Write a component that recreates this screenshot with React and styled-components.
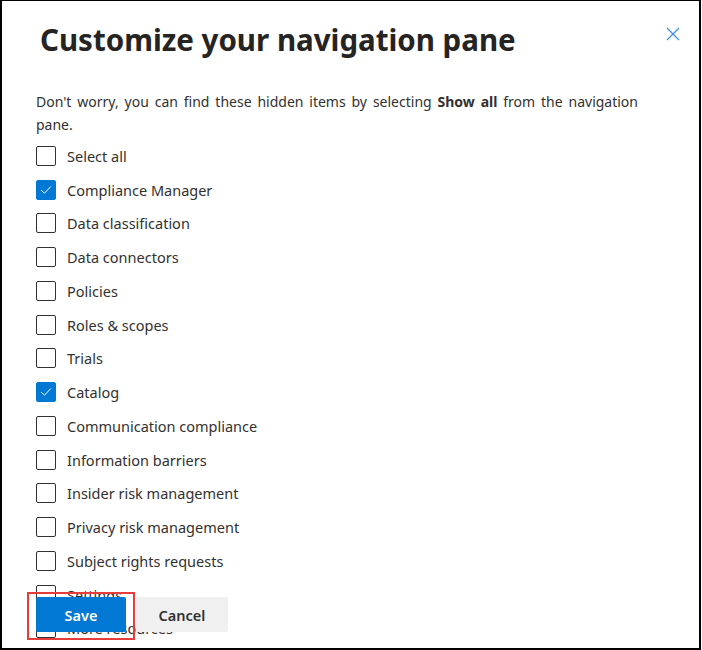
import React from "react";
import styled, { createGlobalStyle } from "styled-components";

const GlobalStyle = createGlobalStyle`
  html, body { margin: 0; padding: 0; background: #ffffff; }
  body { font-family: "Noto Sans", "Open Sans", sans-serif; color: #323130; }
  * { box-sizing: border-box; }
`;

const Frame = styled.div`
  position: relative;
  width: 701px;
  height: 650px;
  border-style: solid;
  border-color: #000;
  border-width: 1px 2px 2px 2px;
  overflow: hidden;
  background: #fff;
`;

const Header = styled.div`
  display: flex;
  align-items: flex-start;
  justify-content: space-between;
  padding: 17px 18px 0 38px;
  height: 89px;
`;

const Title = styled.h1`
  margin: 0;
  font-size: 29.5px;
  line-height: 44px;
  font-weight: 700;
  color: #252423;
  letter-spacing: 0;
`;

const CloseButton = styled.button`
  border: none;
  background: transparent;
  padding: 0;
  margin-top: 8px;
  width: 16px;
  height: 16px;
  display: flex;
  align-items: center;
  justify-content: center;
  cursor: pointer;
`;

const Body = styled.div`
  padding: 0 0 0 34px;
`;

const Description = styled.p`
  margin: 0 0 3px;
  width: 602px;
  font-size: 14px;
  line-height: 23px;
  text-align: justify;
  color: #323130;
  b { font-weight: 700; }
`;

const List = styled.ul`
  list-style: none;
  margin: 0;
  padding: 0;
  display: flex;
  flex-direction: column;
`;

const Row = styled.li`
  display: flex;
  align-items: center;
  gap: 11px;
  height: 33.75px;
  font-size: 14.5px;
  color: #323130;
`;

const Box = styled.span`
  width: 20px;
  height: 20px;
  border-radius: 2px;
  border: 1px solid ${(p) => (p.$checked ? "#0078d4" : "#323130")};
  background: ${(p) => (p.$checked ? "#0078d4" : "#fff")};
  display: flex;
  align-items: center;
  justify-content: center;
  flex: none;
`;

const Footer = styled.div`
  position: absolute;
  left: 34px;
  top: 596px;
  display: flex;
  gap: 10px;
`;

const Highlight = styled.div`
  position: relative;
  &::after {
    content: "";
    position: absolute;
    top: -5px;
    left: -9px;
    right: -9px;
    bottom: -8px;
    border: 2px solid #e53e3a;
    pointer-events: none;
  }
`;

const Button = styled.button`
  height: 35px;
  width: ${(p) => p.$width}px;
  border: none;
  border-radius: 2px;
  font-family: "Noto Sans", "Open Sans", sans-serif;
  font-size: 14.5px;
  font-weight: 600;
  background: ${(p) => (p.$primary ? "#0078d4" : "#f0f0f0")};
  color: ${(p) => (p.$primary ? "#ffffff" : "#323130")};
  padding: 0;
  cursor: pointer;
`;

const items = [
  ["Select all", false],
  ["Compliance Manager", true],
  ["Data classification", false],
  ["Data connectors", false],
  ["Policies", false],
  ["Roles & scopes", false],
  ["Trials", false],
  ["Catalog", true],
  ["Communication compliance", false],
  ["Information barriers", false],
  ["Insider risk management", false],
  ["Privacy risk management", false],
  ["Subject rights requests", false],
  ["Settings", false],
  ["More resources", false],
];

const Check = () => (
  <svg width="14" height="14" viewBox="0 0 14 14" fill="none">
    <path d="M2.5 7.5 L5.5 10.2 L11.5 3.8" stroke="#fff" strokeWidth="1" strokeLinecap="round" strokeLinejoin="round" />
  </svg>
);

const CloseIcon = () => (
  <svg width="14" height="14" viewBox="0 0 14 14" fill="none">
    <path d="M1 1 L13 13 M13 1 L1 13" stroke="#3b8ee0" strokeWidth="1.2" />
  </svg>
);

export default function App() {
  return (
    <>
      <GlobalStyle />
      <Frame>
        <Header>
          <Title>Customize your navigation pane</Title>
          <CloseButton aria-label="Close">
            <CloseIcon />
          </CloseButton>
        </Header>
        <Body>
          <Description>
            Don't worry, you can find these hidden items by selecting <b>Show all</b> from the navigation pane.
          </Description>
          <List>
            {items.map(([label, checked]) => (
              <Row key={label}>
                <Box $checked={checked}>{checked && <Check />}</Box>
                {label}
              </Row>
            ))}
          </List>
        </Body>
        <Footer>
          <Highlight>
            <Button $primary $width={90}>Save</Button>
          </Highlight>
          <Button $width={92}>Cancel</Button>
        </Footer>
      </Frame>
    </>
  );
}
